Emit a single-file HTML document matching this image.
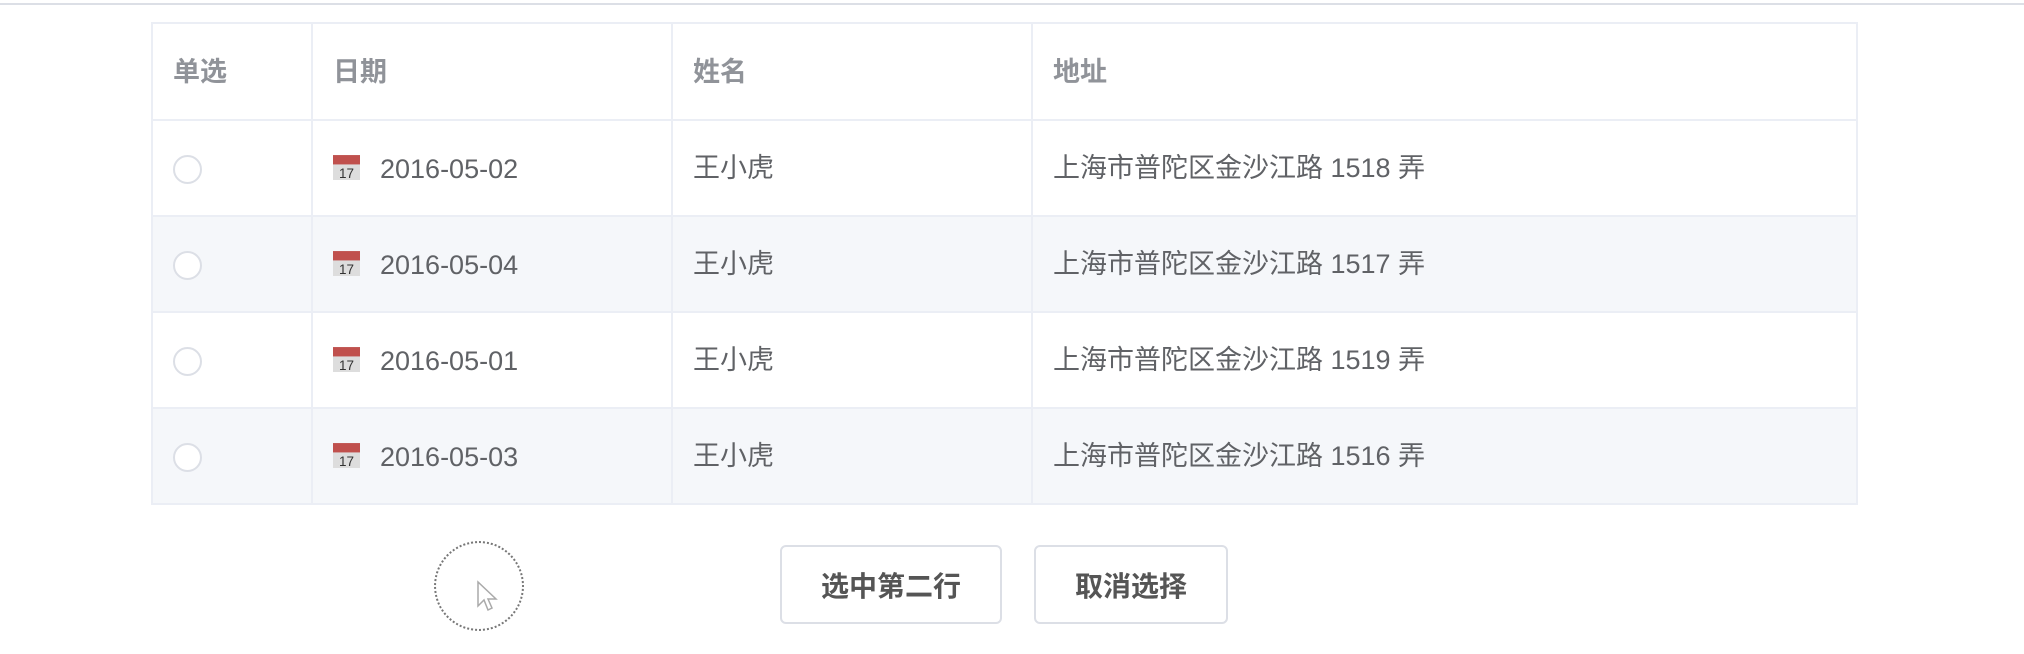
<!DOCTYPE html>
<html><head><meta charset="utf-8"><style>
body{margin:0;width:2024px;height:654px;background:#fff;position:relative;overflow:hidden;font-family:"Liberation Sans","Noto Sans CJK SC",sans-serif;}
.topline{position:absolute;left:0;top:3px;width:2024px;height:2px;background:#dcdfe6}
table{position:absolute;left:151px;top:22px;border-collapse:collapse;width:1707px;}
td,th{border:2px solid #ebeef5;height:96px;padding:0 0 0 20px;text-align:left;font-size:27px;color:#606266;font-weight:normal;box-sizing:border-box;vertical-align:middle;line-height:30px}
th{color:#909399;font-weight:bold;height:97px}
tr.s td{background:#f5f7fa}
.r{display:inline-block;width:25px;height:25px;border:2px solid #dcdfe6;border-radius:50%;background:#fff;vertical-align:middle}
.cal{display:inline-block;width:27px;height:27px;vertical-align:middle;margin-right:20px;position:relative;top:-2px}
.d{vertical-align:middle}
.btn{position:absolute;top:545px;height:79px;border:2px solid #dcdfe6;border-radius:6px;box-sizing:border-box;font-size:28px;font-weight:bold;color:#555;display:flex;align-items:center;justify-content:center}
.cur{position:absolute;left:434px;top:541px;width:90px;height:90px;border:2px dotted #777;border-radius:50%;box-sizing:border-box}
</style></head><body>
<div class="topline"></div>
<table>
<tr><th style="width:160px">单选</th><th style="width:360px">日期</th><th style="width:360px">姓名</th><th>地址</th></tr>
<tr><td><span class="r"></span></td><td><svg class="cal" viewBox="0 0 26 26"><rect x="0" y="2" width="26" height="24" fill="#ddd"/><rect x="0" y="2" width="26" height="9" fill="#c0504d"/><text x="13" y="24" font-size="13" text-anchor="middle" fill="#333" font-family="Liberation Sans">17</text></svg><span class="d">2016-05-02</span></td><td>王小虎</td><td>上海市普陀区金沙江路 1518 弄</td></tr>
<tr class="s"><td><span class="r"></span></td><td><svg class="cal" viewBox="0 0 26 26"><rect x="0" y="2" width="26" height="24" fill="#ddd"/><rect x="0" y="2" width="26" height="9" fill="#c0504d"/><text x="13" y="24" font-size="13" text-anchor="middle" fill="#333" font-family="Liberation Sans">17</text></svg><span class="d">2016-05-04</span></td><td>王小虎</td><td>上海市普陀区金沙江路 1517 弄</td></tr>
<tr><td><span class="r"></span></td><td><svg class="cal" viewBox="0 0 26 26"><rect x="0" y="2" width="26" height="24" fill="#ddd"/><rect x="0" y="2" width="26" height="9" fill="#c0504d"/><text x="13" y="24" font-size="13" text-anchor="middle" fill="#333" font-family="Liberation Sans">17</text></svg><span class="d">2016-05-01</span></td><td>王小虎</td><td>上海市普陀区金沙江路 1519 弄</td></tr>
<tr class="s"><td><span class="r"></span></td><td><svg class="cal" viewBox="0 0 26 26"><rect x="0" y="2" width="26" height="24" fill="#ddd"/><rect x="0" y="2" width="26" height="9" fill="#c0504d"/><text x="13" y="24" font-size="13" text-anchor="middle" fill="#333" font-family="Liberation Sans">17</text></svg><span class="d">2016-05-03</span></td><td>王小虎</td><td>上海市普陀区金沙江路 1516 弄</td></tr>
</table>
<div class="cur"></div>
<svg style="position:absolute;left:476px;top:580px" width="22" height="34" viewBox="0 0 22 34"><path d="M2 2 L2 26 L8 20 L12 30 L16 28 L12 19 L20 19 Z" fill="#fff" stroke="#aaa" stroke-width="1.5"/></svg>
<div class="btn" style="left:780px;width:222px">选中第二行</div>
<div class="btn" style="left:1034px;width:194px">取消选择</div>
</body></html>
